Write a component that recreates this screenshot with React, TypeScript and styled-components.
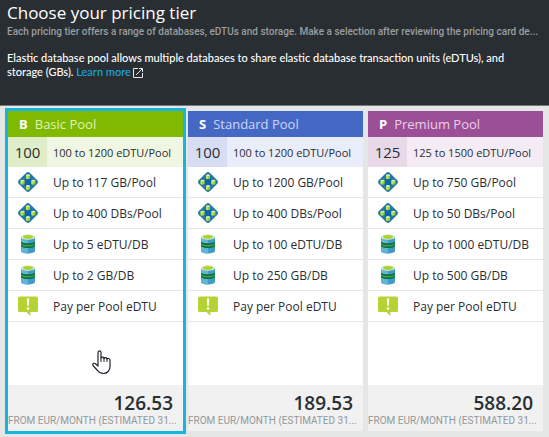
import React, { useState } from "react";
import styled, { createGlobalStyle } from "styled-components";

const GlobalStyle = createGlobalStyle`
  *, *::before, *::after { box-sizing: border-box; }
  body {
    margin: 0;
    min-height: 100vh;
    background: #e5e6e6;
    color: #292e33;
    font-family: "Open Sans", "Noto Sans", sans-serif;
    font-size: 12px;
  }
`;

type Theme = { head: string; name: string; spec: string; amount: string };

const themes: Record<string, Theme> = {
  green: { head: "#7fba00", name: "#e0f2ba", spec: "#eff7e2", amount: "#dfeec8" },
  blue: { head: "#4668c5", name: "#ccd7f5", spec: "#e9ecf9", amount: "#d7ddf3" },
  purple: { head: "#9b4f96", name: "#ecd0ea", spec: "#f4ebf4", amount: "#e8d9e8" },
};

const Blade = styled.main`
  display: flex;
  flex-direction: column;
`;

const Header = styled.header`
  min-height: 106px;
  padding: 0 5px 0 7px;
  background: #292e32;
  border-bottom: 1px solid #777a7c;
  color: #fff;
`;

const Title = styled.h1`
  margin: 0;
  font-size: 17px;
  font-weight: 400;
  line-height: 26px;
`;

const Subtitle = styled.p`
  margin: 0;
  overflow: hidden;
  color: #999da0;
  font-family: Roboto, sans-serif;
  font-size: 10px;
  font-weight: 500;
  line-height: 12px;
  text-overflow: ellipsis;
  white-space: nowrap;
`;

const Intro = styled.p`
  margin: 13px 0 0;
  padding-right: 30px;
  font-family: Lato, sans-serif;
  font-size: 11px;
  font-weight: 500;
  line-height: 14px;
`;

const LearnMore = styled.a`
  display: inline-block;
  color: #18a7e0;
  text-decoration: none;

  svg {
    margin-left: 2px;
    color: #e4e6e7;
    vertical-align: -2px;
  }
`;

const Tiers = styled.form`
  display: grid;
  grid-template-columns: repeat(3, minmax(0, 1fr));
  gap: 5px;
  padding: 5px 6px 6px 8px;
`;

const Card = styled.label`
  position: relative;
  display: flex;
  flex-direction: column;
  min-height: 320px;
  background: #fff;
  cursor: pointer;

  &:has(input:checked) {
    outline: 3px solid #17b4dd;
  }
`;

const TierRadio = styled.input`
  position: absolute;
  margin: 0;
  opacity: 0;
`;

const CardHead = styled.span<{ $theme: Theme }>`
  display: flex;
  gap: 7px;
  height: 26px;
  padding-left: 11px;
  background: ${(p) => p.$theme.head};
  color: ${(p) => p.$theme.name};
  font-size: 13px;
  line-height: 26px;

  b {
    color: #fff;
    font-weight: 700;
  }
`;

const Spec = styled.span<{ $theme: Theme }>`
  display: flex;
  height: 30px;
  background: ${(p) => p.$theme.spec};
  font-size: 11px;
  line-height: 31px;
  white-space: nowrap;
`;

const Amount = styled.span<{ $theme: Theme }>`
  width: 39px;
  margin-right: 6px;
  background: ${(p) => p.$theme.amount};
  font-size: 15px;
  text-align: center;
`;

const Features = styled.ul`
  flex: 1;
  margin: 0;
  padding: 0;
  list-style: none;
`;

const Feature = styled.li`
  display: flex;
  align-items: center;
  gap: 15px;
  height: 31px;
  padding-left: 10px;
  border-bottom: 1px solid #e4e6ea;
  white-space: nowrap;
`;

const Footer = styled.span`
  display: flex;
  flex-direction: column;
  height: 46px;
  padding: 5px 5px 0 0;
  background: #f1f1f1;
`;

const Price = styled.span`
  padding-right: 5px;
  font-size: 19px;
  font-weight: 600;
  line-height: 26px;
  text-align: right;
`;

const Period = styled.span`
  overflow: hidden;
  color: #919899;
  font-family: Roboto, sans-serif;
  font-size: 10px;
  line-height: 10px;
  text-overflow: ellipsis;
  white-space: nowrap;
`;

const Pointer = styled.svg`
  position: absolute;
  top: 239px;
  left: 84px;
  pointer-events: none;
`;

const ExternalIcon = () => (
  <svg width="10" height="11" viewBox="0 0 10 11" fill="none" stroke="currentColor" aria-hidden="true">
    <path d="M5 1.500H.5v9h9V6M6 1.500h3.500V5M9.300 1.700 3 8" />
  </svg>
);

const Can = ({ x, y }: { x: number; y: number }) => (
  <g>
    <path d={`M${x} ${y + 1}v3.300q2 1.200 4 0v-3.300z`} fill="#9fd025" />
    <path d={`M${x} ${y + 1}v3.300q.8 .6 1.800 .7v-3.300z`} fill="#c3e35f" />
    <ellipse cx={x + 2} cy={y + 1} rx="2" ry=".9" fill="#d9efA0" />
  </g>
);

const PoolIcon = () => (
  <svg width="20" height="20" viewBox="0 0 20 20" aria-hidden="true">
    <path d="M8.300.7q1.700-1.300 3.400 0l7.600 7.600q1.300 1.700 0 3.400l-7.600 7.600q-1.700 1.300-3.400 0L.7 11.700q-1.300-1.700 0-3.400z" fill="#2476ab" />
    <path d="m10 4 6 6-6 6-6-6z" fill="#0c66ae" />
    <Can x={8} y={2.2} />
    <Can x={2.6} y={7.6} />
    <Can x={13.4} y={7.6} />
    <Can x={8} y={13} />
  </svg>
);

const DatabaseIcon = () => (
  <svg width="20" height="20" viewBox="0 0 20 20" aria-hidden="true">
    <path d="M3 3v14c0 3.300 14 3.300 14 0V3z" fill="#3f9cc8" />
    <path d="M3 3v14c0 1.700 3.500 2.500 7 2.500V3z" fill="#63b5d8" />
    <ellipse cx="10" cy="3" rx="7" ry="2.800" fill="#dcebd0" />
    <ellipse cx="10" cy="2.900" rx="5" ry="1.800" fill="#a9d32f" />
    <path d="M3 7.500c1 2.400 13 2.400 14 0v4.700c-1 2.400-13 2.400-14 0z" fill="#12703f" />
    <path d="M3 9.400c1 2.400 13 2.400 14 0v1c-1 2.400-13 2.400-14 0z" fill="#4fb552" />
  </svg>
);

const NoticeIcon = () => (
  <svg width="20" height="20" viewBox="0 0 20 20" aria-hidden="true">
    <path d="M1.500.5h17q1.500 0 1.500 1.500v12.500q0 1.500-1.500 1.500h-6.200v4L8.500 16h-7Q0 16 0 14.500V2Q0 .5 1.500.5z" fill="#b5d334" />
    <path d="M8.800 2.500h2.400l-.5 7.500H9.300z" fill="#fff" />
    <circle cx="10" cy="12.500" r="1.300" fill="#fff" />
  </svg>
);

const HandPointer = () => (
  <Pointer width="20" height="25" viewBox="0 0 20 25" aria-hidden="true">
    <path
      d="M6 14V2.600c0-2.300 3-2.300 3 0V8c.5-1.300 2.900-1 3 .5.500-1.300 2.900-1 3 .5.700-1.100 3-.6 3 1v6.500c0 4-2.600 7-6.500 7-3 0-4.500-1-6-3L1 15.500c-1-1.600 1-3 2.500-1.700L6 16z"
      fill="#fff"
      stroke="#22232c"
      strokeWidth="1.200"
      strokeLinejoin="round"
    />
    <path d="M9 7.500V12m3-4v4m3-3.500V12" fill="none" stroke="#22232c" />
  </Pointer>
);

const icons = [PoolIcon, PoolIcon, DatabaseIcon, DatabaseIcon, NoticeIcon];

const tiers = [
  {
    code: "B",
    name: "Basic Pool",
    theme: themes.green,
    amount: "100",
    range: "100 to 1200 eDTU/Pool",
    features: ["Up to 117 GB/Pool", "Up to 400 DBs/Pool", "Up to 5 eDTU/DB", "Up to 2 GB/DB", "Pay per Pool eDTU"],
    price: "126.53",
  },
  {
    code: "S",
    name: "Standard Pool",
    theme: themes.blue,
    amount: "100",
    range: "100 to 1200 eDTU/Pool",
    features: ["Up to 1200 GB/Pool", "Up to 400 DBs/Pool", "Up to 100 eDTU/DB", "Up to 250 GB/DB", "Pay per Pool eDTU"],
    price: "189.53",
  },
  {
    code: "P",
    name: "Premium Pool",
    theme: themes.purple,
    amount: "125",
    range: "125 to 1500 eDTU/Pool",
    features: ["Up to 750 GB/Pool", "Up to 50 DBs/Pool", "Up to 1000 eDTU/DB", "Up to 500 GB/DB", "Pay per Pool eDTU"],
    price: "588.20",
  },
];

export default function App() {
  const [selected, setSelected] = useState("B");
  return (
    <Blade>
      <GlobalStyle />
      <Header>
        <Title>Choose your pricing tier</Title>
        <Subtitle>
          Each pricing tier offers a range of databases, eDTUs and storage. Make a selection after reviewing the pricing
          card de...
        </Subtitle>
        <Intro>
          Elastic database pool allows multiple databases to share elastic database transaction units (eDTUs), and
          storage (GBs).{" "}
          <LearnMore href="#learn-more">
            Learn more
            <ExternalIcon />
          </LearnMore>
        </Intro>
      </Header>
      <Tiers>
        {tiers.map((tier) => (
          <Card key={tier.code}>
            <TierRadio
              type="radio"
              name="tier"
              value={tier.code}
              checked={selected === tier.code}
              onChange={() => setSelected(tier.code)}
            />
            <CardHead $theme={tier.theme}>
              <b>{tier.code}</b>
              {tier.name}
            </CardHead>
            <Spec $theme={tier.theme}>
              <Amount $theme={tier.theme}>{tier.amount}</Amount>
              {tier.range}
            </Spec>
            <Features>
              {tier.features.map((text, i) => {
                const Icon = icons[i];
                return (
                  <Feature key={text}>
                    <Icon />
                    {text}
                  </Feature>
                );
              })}
            </Features>
            <Footer>
              <Price>{tier.price}</Price>
              <Period>FROM EUR/MONTH (ESTIMATED 31...</Period>
            </Footer>
            {tier.code === "B" && <HandPointer />}
          </Card>
        ))}
      </Tiers>
    </Blade>
  );
}
